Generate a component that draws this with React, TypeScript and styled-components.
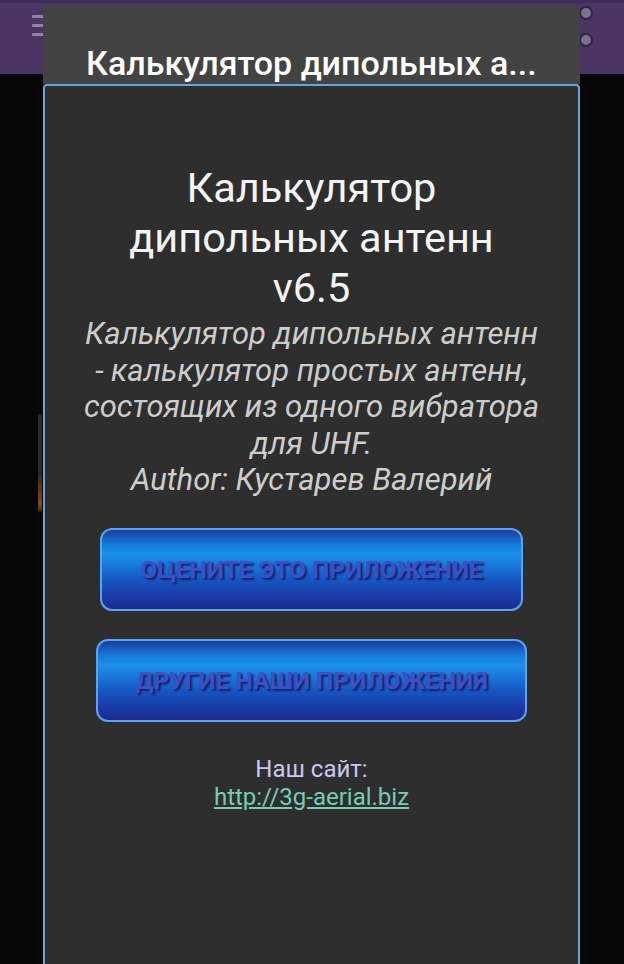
import React from "react";
import styled, { createGlobalStyle } from "styled-components";

const Global = createGlobalStyle`
  html, body { margin: 0; padding: 0; background: #060606; }
  body { font-family: Roboto, "Noto Sans", sans-serif; }
  * { box-sizing: border-box; }
`;

const Screen = styled.div`
  position: relative;
  width: 624px;
  height: 964px;
  overflow: hidden;
  background: #060606;
`;

const AppBar = styled.div`
  height: 74px;
  background: #4a3566;
  border-top: 3px solid #3f2c58;
  position: relative;
`;

const Hamburger = styled.div`
  position: absolute;
  left: 32px;
  top: 12px;
  width: 14px;
  display: flex;
  flex-direction: column;
  gap: 6px;
  span {
    display: block;
    height: 3px;
    background: #8f86a0;
    border-radius: 1px;
  }
`;

const Dot = styled.div<{ $top: number }>`
  position: absolute;
  left: 579px;
  top: ${(p) => p.$top}px;
  width: 14px;
  height: 14px;
  border-radius: 50%;
  background: #7a7290;
  border: 2px solid #2f2440;
`;

const BgSlider = styled.div`
  position: absolute;
  left: 38px;
  top: 414px;
  width: 4px;
  height: 98px;
  background: linear-gradient(to bottom, #2a2a2a 0%, #2c2a28 60%, #6a3a14 80%, #8a4a18 92%, #3a2410 100%);
  border-radius: 2px;
`;

const Dialog = styled.div`
  position: absolute;
  left: 43px;
  top: 5px;
  width: 537px;
  bottom: -10px;
  display: flex;
  flex-direction: column;
`;

const DialogHeader = styled.div`
  height: 79px;
  background: #434343;
  display: flex;
  align-items: flex-end;
  padding: 0 0 1px 43px;
`;

const HeaderTitle = styled.div`
  color: #ffffff;
  font-family: Roboto, sans-serif;
  font-weight: 500;
  font-size: 34px;
  line-height: 40px;
  white-space: nowrap;
`;

const Panel = styled.div`
  flex: 1;
  background: #2e2e2e;
  border: 2px solid #6aa3dc;
  border-radius: 4px 4px 0 0;
  display: flex;
  flex-direction: column;
  align-items: center;
  padding-top: 77px;
`;

const AppTitle = styled.div`
  color: #f4f4f4;
  font-family: Roboto, sans-serif;
  font-size: 41.5px;
  line-height: 50px;
  text-align: center;
`;

const Description = styled.div`
  margin-top: 3px;
  color: #cdcdcd;
  font-family: Roboto, sans-serif;
  font-style: italic;
  font-size: 31px;
  line-height: 36.5px;
  text-align: center;
  white-space: nowrap;
`;

const GlossButton = styled.button<{ $width: number; $mt: number }>`
  margin-top: ${(p) => p.$mt}px;
  width: ${(p) => p.$width}px;
  height: 83px;
  border: 2px solid #5aa4ec;
  border-radius: 12px;
  background: linear-gradient(
    to bottom,
    #1c3c9c 0%,
    #1878d8 18%,
    #1a90e8 30%,
    #1878da 45%,
    #1658c4 62%,
    #1a3ea8 82%,
    #1c2a92 100%
  );
  color: #3e50c6;
  font-family: Roboto, "Liberation Sans", sans-serif;
  font-weight: 700;
  font-size: 24.5px;
  letter-spacing: 0;
  text-shadow: 2px 2px 2px #18206a;
  display: flex;
  align-items: center;
  justify-content: center;
  padding: 0;
  cursor: pointer;
`;

const SiteLabel = styled.div`
  margin-top: 33px;
  color: #c9c7f2;
  font-family: Roboto, sans-serif;
  font-size: 24px;
  line-height: 28px;
  text-align: center;
`;

const SiteLink = styled.a`
  color: #76cbb9;
  font-family: Roboto, sans-serif;
  font-size: 24px;
  line-height: 28px;
  text-decoration: underline;
  text-underline-offset: 2px;
`;

export default function App() {
  return (
    <>
      <Global />
      <Screen>
        <AppBar>
          <Hamburger>
            <span />
            <span />
            <span />
          </Hamburger>
          <Dot $top={3} />
          <Dot $top={30} />
        </AppBar>
        <BgSlider />
        <Dialog>
          <DialogHeader>
            <HeaderTitle>Калькулятор дипольных а...</HeaderTitle>
          </DialogHeader>
          <Panel>
            <AppTitle>
              Калькулятор
              <br />
              дипольных антенн
              <br />
              v6.5
            </AppTitle>
            <Description>
              Калькулятор дипольных антенн
              <br />- калькулятор простых антенн,
              <br />
              состоящих из одного вибратора
              <br />
              для UHF.
              <br />
              Author: Кустарев Валерий
            </Description>
            <GlossButton $width={423} $mt={29}>ОЦЕНИТЕ ЭТО ПРИЛОЖЕНИЕ</GlossButton>
            <GlossButton $width={431} $mt={28}>ДРУГИЕ НАШИ ПРИЛОЖЕНИЯ</GlossButton>
            <SiteLabel>Наш сайт:</SiteLabel>
            <SiteLink href="#">http://3g-aerial.biz</SiteLink>
          </Panel>
        </Dialog>
      </Screen>
    </>
  );
}
